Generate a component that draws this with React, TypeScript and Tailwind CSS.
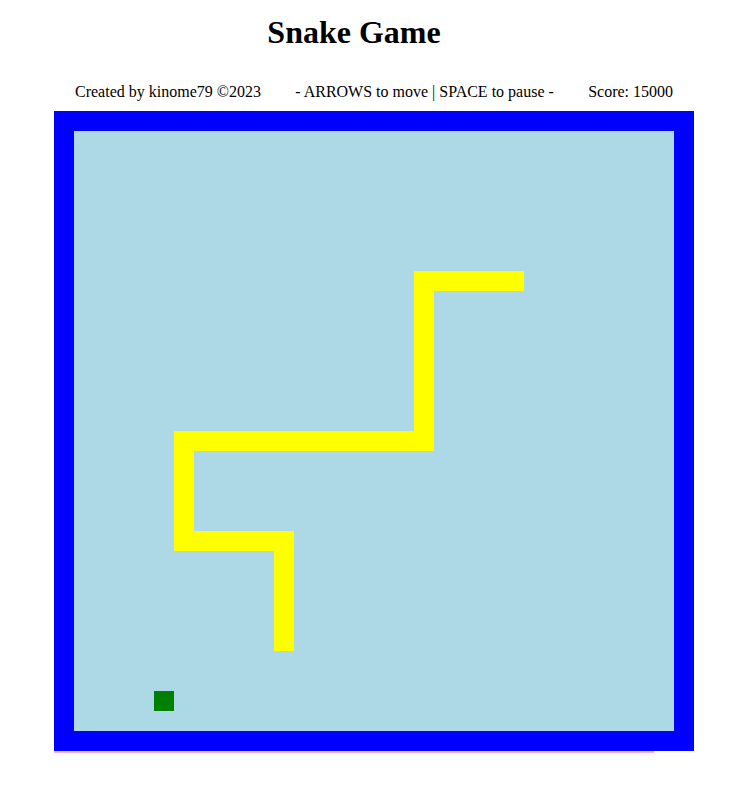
import React from "react";

const snake = [
  { x: 340, y: 140, w: 110, h: 20 },
  { x: 340, y: 140, w: 20, h: 180 },
  { x: 100, y: 300, w: 260, h: 20 },
  { x: 100, y: 300, w: 20, h: 120 },
  { x: 100, y: 400, w: 120, h: 20 },
  { x: 200, y: 400, w: 20, h: 120 },
];

export default function App() {
  return (
    <div className="min-h-[800px] w-[754px] bg-white text-black" style={{ fontFamily: '"Liberation Serif", "Times New Roman", serif' }}>
      <div className="ml-[54px] w-[600px]">
        <h1 className="pt-[14px] text-center text-[32px] font-bold leading-[37px]">Snake Game</h1>
        <div className="mt-[32px] flex w-[640px] justify-between px-[21px] text-[16px] leading-[18px]">
          <span>Created by kinome79 ©2023</span>
          <span>- ARROWS to move | SPACE to pause -</span>
          <span>Score: 15000</span>
        </div>
        <div className="mt-[10px] w-[640px] border-[20px] border-[#0000ff]">
          <div className="relative h-[600px] w-[600px] bg-[#add8e6]">
            {snake.map((s, i) => (
              <div
                key={i}
                className="absolute bg-[#ffff00]"
                style={{ left: s.x, top: s.y, width: s.w, height: s.h }}
              />
            ))}
            <div className="absolute left-[80px] top-[560px] h-[20px] w-[20px] bg-[#008000]" />
          </div>
        </div>
        <div className="h-[2px] w-[600px] bg-[#f4b8d4]" />
      </div>
    </div>
  );
}
